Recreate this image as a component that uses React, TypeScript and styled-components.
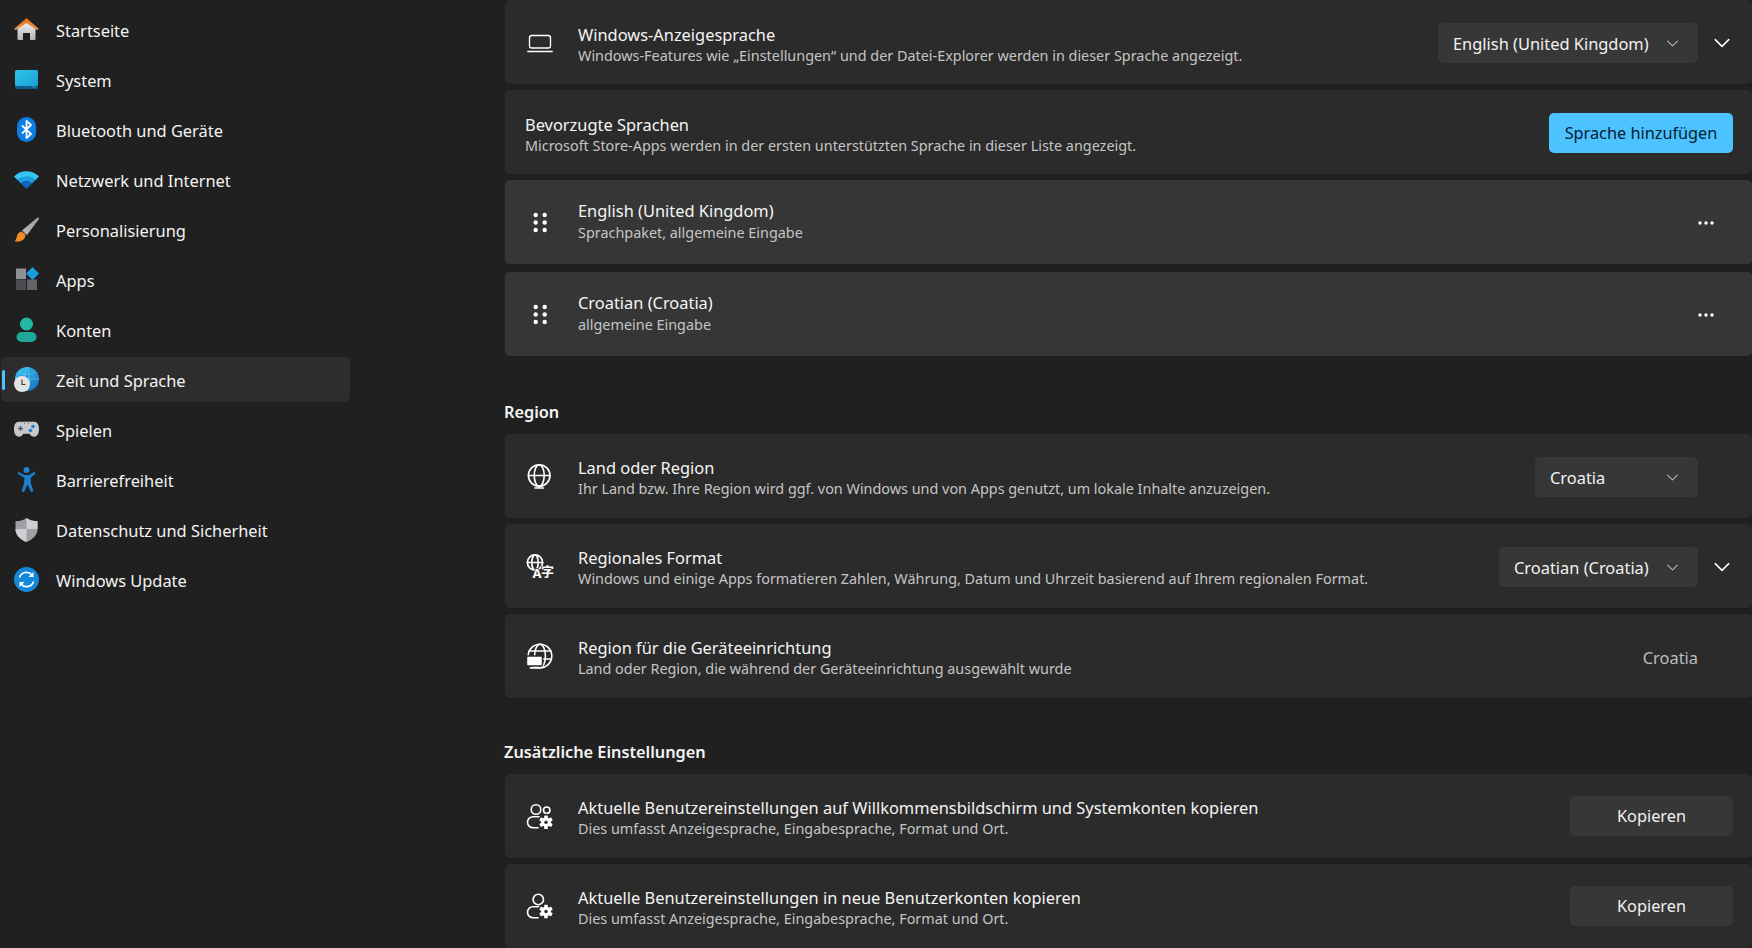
import React from "react";
import styled, { createGlobalStyle } from "styled-components";

const Global = createGlobalStyle`
  html, body { margin: 0; padding: 0; background: #202020; height: 100%; overflow: hidden; }
  * { box-sizing: border-box; }
  body { font-family: "Noto Sans", "Open Sans", sans-serif; color: #fff; }
`;

const Page = styled.div`
  display: flex;
  width: 1752px;
  height: 948px;
  overflow: hidden;
  background: #202020;
`;

const Sidebar = styled.nav`
  width: 505px;
  flex: none;
  padding: 7px 0 0 1px;
  display: flex;
  flex-direction: column;
  gap: 5px;
`;

const NavItem = styled.div<{ $active?: boolean }>`
  position: relative;
  width: 349px;
  height: 45px;
  display: flex;
  align-items: center;
  gap: 17px;
  padding-left: 13px;
  border-radius: 5px;
  background: ${(p) => (p.$active ? "#2d2d2d" : "transparent")};
  font-size: 16.4px;
  color: #f4f4f4;
`;

const NavLabel = styled.span`
  padding-top: 1px;
`;

const Accent = styled.span`
  position: absolute;
  left: 1px;
  top: 13px;
  width: 3px;
  height: 20px;
  border-radius: 2px;
  background: #4cc2ff;
`;

const NavIcon = styled.svg`
  width: 25px;
  height: 25px;
  flex: none;
`;

const Main = styled.main`
  flex: 1;
  display: flex;
  flex-direction: column;
`;

const Card = styled.section<{ $raised?: boolean; $gap?: number }>`
  height: 85px;
  flex: none;
  display: flex;
  align-items: center;
  margin-bottom: ${(p) => p.$gap ?? 5}px;
  border-radius: 5px;
  border-bottom: 1px solid #1c1c1c;
  background: ${(p) => (p.$raised ? "#363636" : "#2b2b2b")};
`;

const LeadIcon = styled.div`
  width: 73px;
  flex: none;
  display: flex;
  justify-content: center;
  padding-right: 3px;
`;

const PlainLead = styled.div`
  width: 20px;
  flex: none;
`;

const TextBlock = styled.div<{ $kind?: "top" | "raised" }>`
  flex: 1;
  min-width: 0;
  display: flex;
  flex-direction: column;
  gap: ${(p) => (p.$kind === "raised" ? 1 : 0)}px;
  padding: ${(p) => (p.$kind === "raised" ? "0 0 2px" : p.$kind === "top" ? "4px 0 0" : "2px 0 0")};
`;

const Title = styled.div`
  font-size: 16.4px;
  line-height: 22px;
  color: #f5f5f5;
`;

const Sub = styled.div`
  font-size: 14.4px;
  line-height: 19px;
  color: #c5c5c5;
`;

const Trail = styled.div<{ $pad: number; $flat?: boolean }>`
  flex: none;
  display: flex;
  align-items: center;
  margin-top: ${(p) => (p.$flat ? 0 : 2)}px;
  padding-right: ${(p) => p.$pad}px;
`;

const Select = styled.div<{ $w: number }>`
  width: ${(p) => p.$w}px;
  height: 40px;
  padding: 0 19px 0 15px;
  display: flex;
  align-items: center;
  justify-content: space-between;
  border-radius: 5px;
  background: #373737;
  font-size: 16.4px;
  color: #f2f2f2;
`;

const Expand = styled.div`
  width: 54px;
  display: flex;
  justify-content: center;
  padding-right: 6px;
`;

const Primary = styled.button`
  width: 184px;
  height: 40px;
  border: 0;
  border-radius: 5px;
  background: #4cc2ff;
  color: #04202f;
  font: inherit;
  font-size: 16.3px;
  padding: 0;
`;

const Secondary = styled.button`
  width: 163px;
  height: 40px;
  border: 0;
  border-radius: 5px;
  background: #373737;
  color: #f2f2f2;
  font: inherit;
  font-size: 16.3px;
  padding: 0;
`;

const Value = styled.div`
  font-size: 16.4px;
  color: #bdbdbd;
`;

const Heading = styled.h2<{ $top: number }>`
  margin: ${(p) => p.$top}px 0 10px -1px;
  height: 22px;
  flex: none;
  font-size: 16.3px;
  line-height: 20px;
  font-weight: 600;
  color: #f5f5f5;
`;

const Chevron = ({ size = 18, color = "#fff" }: { size?: number; color?: string }) => (
  <svg width={size} height={size} viewBox="0 0 16 16" fill="none">
    <path d="M2 5l6 6 6-6" stroke={color} strokeWidth="1.3" strokeLinecap="round" strokeLinejoin="round" />
  </svg>
);

const Small = () => <Chevron size={13} color="#b8b8b8" />;

const Dots = () => (
  <svg width="16" height="4" viewBox="0 0 16 4" fill="#fff">
    <circle cx="2" cy="2" r="1.7" />
    <circle cx="8" cy="2" r="1.7" />
    <circle cx="14" cy="2" r="1.7" />
  </svg>
);

const Glyph = ({ children }: { children: React.ReactNode }) => (
  <svg width="34" height="34" viewBox="-3 -3 34 34" fill="none" stroke="#fff" strokeWidth="1.6" strokeLinecap="round" strokeLinejoin="round">
    {children}
  </svg>
);

const Laptop = () => (
  <Glyph>
    <rect x="3.5" y="7.500" width="21" height="12.500" rx="2.200" strokeWidth="1.300" />
    <path d="M1.800 23.500h24.400" strokeWidth="1.300" />
  </Glyph>
);

const Grip = () => (
  <Glyph>
    {[7, 14.5, 22].map((y) => (
      <g key={y} fill="#fff" stroke="none">
        <circle cx="9.700" cy={y} r="2.200" />
        <circle cx="18.700" cy={y} r="2.200" />
      </g>
    ))}
  </Glyph>
);

const Globe = () => (
  <Glyph>
    <circle cx="13.200" cy="13.500" r="10.800" />
    <ellipse cx="13.200" cy="13.500" rx="5" ry="10.800" />
    <path d="M2.400 13.500h21.600M13.200 24.300v1.700M9 26h8.400" />
  </Glyph>
);

const GlobeLang = () => (
  <Glyph>
    <circle cx="9" cy="10.500" r="7.600" strokeWidth="1.700" />
    <ellipse cx="9" cy="10.500" rx="3.200" ry="7.600" strokeWidth="1.700" />
    <path d="M1.400 10.500h15.200" strokeWidth="1.700" />
    <text x="11" y="26" textAnchor="middle" fontFamily="'Noto Sans', sans-serif" fontSize="13" fontWeight="700" fill="#fff" stroke="#2b2b2b" strokeWidth="1.500" paintOrder="stroke">A</text>
    <text x="21.500" y="23.500" textAnchor="middle" fontFamily="'Noto Sans CJK SC', sans-serif" fontSize="13" fontWeight="700" fill="#fff" stroke="#2b2b2b" strokeWidth="1.500" paintOrder="stroke">字</text>
  </Glyph>
);

const GlobeDevice = () => (
  <Glyph>
    <circle cx="14" cy="14" r="11.800" />
    <ellipse cx="14" cy="14" rx="5.400" ry="11.800" />
    <path d="M3 9h22M3 17h22" />
    <rect x="0.500" y="14" width="16" height="10" rx="1.500" fill="#fff" stroke="#2b2b2b" strokeWidth="1.400" />
    <path d="M4.500 25.800h8.500" strokeWidth="1.800" />
  </Glyph>
);

const Gear = ({ x, y }: { x: number; y: number }) => (
  <g transform={`translate(${x} ${y})`} stroke="none">
    <circle r="8.400" fill="#2b2b2b" />
    <circle r="4.800" fill="#fff" />
    {[0, 60, 120].map((a) => (
      <rect key={a} x="-1.800" y="-6.800" width="3.600" height="13.600" rx=".6" fill="#fff" transform={`rotate(${a})`} />
    ))}
    <circle r="1.700" fill="#2b2b2b" />
  </g>
);

const UsersGear = () => (
  <Glyph>
    <circle cx="10" cy="7.500" r="4.800" />
    <circle cx="20.700" cy="8.200" r="3.200" />
    <path d="M15 14.800H7a5.500 5.500 0 0 0 0 11h5" />
    <Gear x={20} y={20.200} />
  </Glyph>
);

const UserGear = () => (
  <Glyph>
    <circle cx="12.300" cy="7.500" r="5.200" />
    <path d="M15 14.800H7a5.500 5.500 0 0 0 0 11h5" />
    <Gear x={20} y={19.500} />
  </Glyph>
);

const navItems: { label: string; active?: boolean; icon: React.ReactNode }[] = [
  {
    label: "Startseite",
    icon: (
      <>
        <defs>
          <linearGradient id="hb" x1="0" y1="0" x2="0" y2="1"><stop offset="0" stopColor="#f4f4f4" /><stop offset="1" stopColor="#b4b4b4" /></linearGradient>
          <linearGradient id="hr" x1="0" y1="0" x2="0" y2="1"><stop offset="0" stopColor="#d86a14" /><stop offset="1" stopColor="#f09a48" /></linearGradient>
        </defs>
        <path d="M3.500 10.500L12.500 4l9 6.500V22a1 1 0 0 1-1 1h-4.500v-7H9v7H4.500a1 1 0 0 1-1-1z" fill="url(#hb)" />
        <path d="M.5 11.500L12.500 1l12 10.500-1 1.800L12.500 6 1.500 13.300z" fill="url(#hr)" />
      </>
    ),
  },
  {
    label: "System",
    icon: (
      <>
        <defs>
          <linearGradient id="sy" x1="0" y1="0" x2="1" y2="1"><stop offset="0" stopColor="#2fc6e6" /><stop offset="1" stopColor="#1c9ed8" /></linearGradient>
        </defs>
        <rect x="1" y="3" width="23" height="16" rx="1.500" fill="url(#sy)" />
        <path d="M1 19h23v1.500a1.500 1.500 0 0 1-1.500 1.500h-20A1.500 1.500 0 0 1 1 20.500z" fill="#10598c" />
        <path d="M18.500 20h1M20.500 20h1" stroke="#9fd8ee" strokeWidth=".8" />
      </>
    ),
  },
  {
    label: "Bluetooth und Geräte",
    icon: (
      <>
        <rect x="3" y="0" width="19" height="25" rx="9.500" fill="#0a7fe8" />
        <path d="M8 8.500l9 8.500-4.500 4V4l4.500 4L8 16.500" fill="none" stroke="#fff" strokeWidth="1.800" strokeLinejoin="round" />
      </>
    ),
  },
  {
    label: "Netzwerk und Internet",
    icon: (
      <>
        <path d="M0 9.500C6.500 2.500 18.500 2.500 25 9.500l-3.800 3.800C16.500 8.500 8.500 8.500 3.800 13.300z" fill="#35c5f3" />
        <path d="M3.800 13.300C8.500 8.500 16.500 8.500 21.200 13.300l-3.400 3.400C14.500 13.500 10.500 13.500 7.200 16.700z" fill="#1c9ee6" />
        <path d="M7.200 16.700C10.500 13.500 14.500 13.500 17.800 16.700L12.500 22z" fill="#0f66bf" />
      </>
    ),
  },
  {
    label: "Personalisierung",
    icon: (
      <>
        <defs>
          <linearGradient id="br" x1="1" y1="0" x2="0" y2="1"><stop offset="0" stopColor="#9a9c9f" /><stop offset="1" stopColor="#b9bbbe" /></linearGradient>
        </defs>
        <path d="M23.500.5C24.500.3 25.200 1 25 2L13 18l-5-4.500z" fill="url(#br)" />
        <path d="M7.500 14.500c-3 .5-4 2.500-4.500 4.500C2.500 21 1.800 23.300.5 24.500c4 .5 8-.5 9.500-2.500 1.500-2 1.800-3.800 1.100-5z" fill="#f08a24" />
      </>
    ),
  },
  {
    label: "Apps",
    icon: (
      <>
        <rect x="2" y="1.500" width="10" height="10.500" fill="#8e9094" />
        <rect x="2" y="12.500" width="10" height="10.500" fill="#4b4d50" />
        <rect x="13" y="12.500" width="10" height="10.500" fill="#62646a" />
        <path d="M18.500 0L25 6.500 18.500 13 12 6.500z" fill="#1b9de2" />
      </>
    ),
  },
  {
    label: "Konten",
    icon: (
      <>
        <circle cx="12.500" cy="7" r="6.500" fill="#22b8a4" />
        <rect x="2.500" y="15" width="20" height="10" rx="5" fill="#1fa698" />
      </>
    ),
  },
  {
    label: "Zeit und Sprache",
    active: true,
    icon: (
      <>
        <defs>
          <linearGradient id="gl" x1="0" y1="0" x2="1" y2="1"><stop offset="0" stopColor="#3fc6f0" /><stop offset="1" stopColor="#0f6fc2" /></linearGradient>
        </defs>
        <circle cx="13" cy="12" r="12" fill="url(#gl)" />
        <path d="M5 5c4 3 12 3 16 0M13 0c-3 5-3 18 0 24M13 0c3 5 3 18 0 24M1 12h24" fill="none" stroke="#7fd8f5" strokeWidth=".7" opacity=".7" />
        <circle cx="8" cy="17" r="8" fill="#e2e2e2" />
        <path d="M8 12.500V17.500h3.500" fill="none" stroke="#444" strokeWidth="1.200" />
      </>
    ),
  },
  {
    label: "Spielen",
    icon: (
      <>
        <path d="M5 4.700h15c3.500 0 5 3 5 7.500 0 4.500-2 7.500-5 7.500-2 0-3-1.200-4.500-3H9.500c-1.500 1.800-2.500 3-4.500 3-3 0-5-3-5-7.500C0 7.700 1.500 4.700 5 4.700z" fill="#c6c8cc" />
        <path d="M6.500 9v5M4 11.500h5" stroke="#5a5c60" strokeWidth="1.500" />
        <circle cx="19" cy="9.500" r="1.800" fill="#1b82d8" />
        <circle cx="16.500" cy="13.500" r="1.800" fill="#1b82d8" />
        <circle cx="10.500" cy="6.300" r=".5" fill="#5a5c60" />
        <circle cx="14.500" cy="6.300" r=".5" fill="#5a5c60" />
      </>
    ),
  },
  {
    label: "Barrierefreiheit",
    icon: (
      <>
        <circle cx="12.500" cy="3" r="3" fill="#1b82d2" />
        <path d="M3.500 6.500l.9-1.800L10 8h5l5.600-3.300.9 1.800-5 4.500.6 6 2.400 7.500-2.600.5-3-7h-.8l-3 7-2.600-.5 2.400-7.500.6-6z" fill="#1b82d2" />
      </>
    ),
  },
  {
    label: "Datenschutz und Sicherheit",
    icon: (
      <>
        <path d="M12.500 1c3 2.300 7 3.200 11 3.200V12c0 6-4.500 10.200-11 13-6.500-2.800-11-7-11-13V4.200c4 0 8-.9 11-3.200z" fill="#9fa1a4" />
        <path d="M12.500 1c3 2.300 7 3.200 11 3.200V12H12.500zM12.500 12H1.500c0 6 4.500 10.200 11 13z" fill="#cfd0d2" />
      </>
    ),
  },
  {
    label: "Windows Update",
    icon: (
      <>
        <circle cx="12.500" cy="12.500" r="12.500" fill="#1487d8" />
        <path d="M5.500 10.500a7.200 7.200 0 0 1 12.500-2.500M19.500 14.500a7.200 7.200 0 0 1-12.500 2.500" fill="none" stroke="#fff" strokeWidth="1.700" />
        <path d="M19.500 5v5h-5zM5.500 20v-5h5z" fill="#fff" />
      </>
    ),
  },
];

export default function App() {
  return (
    <Page>
      <Global />
      <Sidebar>
        {navItems.map((n) => (
          <NavItem key={n.label} $active={n.active}>
            {n.active && <Accent />}
            <NavIcon viewBox="0 0 25 25">{n.icon}</NavIcon>
            <NavLabel>{n.label}</NavLabel>
          </NavItem>
        ))}
      </Sidebar>
      <Main>
        <Card>
          <LeadIcon><Laptop /></LeadIcon>
          <TextBlock $kind="top">
            <Title>Windows-Anzeigesprache</Title>
            <Sub>Windows-Features wie „Einstellungen“ und der Datei-Explorer werden in dieser Sprache angezeigt.</Sub>
          </TextBlock>
          <Trail $pad={0}>
            <Select $w={260}>English (United Kingdom)<Small /></Select>
            <Expand><Chevron /></Expand>
          </Trail>
        </Card>
        <Card>
          <PlainLead />
          <TextBlock $kind="top">
            <Title>Bevorzugte Sprachen</Title>
            <Sub>Microsoft Store-Apps werden in der ersten unterstützten Sprache in dieser Liste angezeigt.</Sub>
          </TextBlock>
          <Trail $pad={19}><Primary>Sprache hinzufügen</Primary></Trail>
        </Card>
        <Card $raised $gap={7}>
          <LeadIcon><Grip /></LeadIcon>
          <TextBlock $kind="raised">
            <Title>English (United Kingdom)</Title>
            <Sub>Sprachpaket, allgemeine Eingabe</Sub>
          </TextBlock>
          <Trail $pad={38}><Dots /></Trail>
        </Card>
        <Card $raised>
          <LeadIcon><Grip /></LeadIcon>
          <TextBlock $kind="raised">
            <Title>Croatian (Croatia)</Title>
            <Sub>allgemeine Eingabe</Sub>
          </TextBlock>
          <Trail $pad={38}><Dots /></Trail>
        </Card>

        <Heading $top={40}>Region</Heading>
        <Card>
          <LeadIcon><Globe /></LeadIcon>
          <TextBlock>
            <Title>Land oder Region</Title>
            <Sub>Ihr Land bzw. Ihre Region wird ggf. von Windows und von Apps genutzt, um lokale Inhalte anzuzeigen.</Sub>
          </TextBlock>
          <Trail $pad={54}><Select $w={163}>Croatia<Small /></Select></Trail>
        </Card>
        <Card>
          <LeadIcon><GlobeLang /></LeadIcon>
          <TextBlock>
            <Title>Regionales Format</Title>
            <Sub>Windows und einige Apps formatieren Zahlen, Währung, Datum und Uhrzeit basierend auf Ihrem regionalen Format.</Sub>
          </TextBlock>
          <Trail $pad={0}>
            <Select $w={199}>Croatian (Croatia)<Small /></Select>
            <Expand><Chevron /></Expand>
          </Trail>
        </Card>
        <Card>
          <LeadIcon><GlobeDevice /></LeadIcon>
          <TextBlock>
            <Title>Region für die Geräteeinrichtung</Title>
            <Sub>Land oder Region, die während der Geräteeinrichtung ausgewählt wurde</Sub>
          </TextBlock>
          <Trail $pad={54}><Value>Croatia</Value></Trail>
        </Card>

        <Heading $top={38}>Zusätzliche Einstellungen</Heading>
        <Card>
          <LeadIcon><UsersGear /></LeadIcon>
          <TextBlock>
            <Title>Aktuelle Benutzereinstellungen auf Willkommensbildschirm und Systemkonten kopieren</Title>
            <Sub>Dies umfasst Anzeigesprache, Eingabesprache, Format und Ort.</Sub>
          </TextBlock>
          <Trail $pad={19} $flat><Secondary>Kopieren</Secondary></Trail>
        </Card>
        <Card>
          <LeadIcon><UserGear /></LeadIcon>
          <TextBlock>
            <Title>Aktuelle Benutzereinstellungen in neue Benutzerkonten kopieren</Title>
            <Sub>Dies umfasst Anzeigesprache, Eingabesprache, Format und Ort.</Sub>
          </TextBlock>
          <Trail $pad={19} $flat><Secondary>Kopieren</Secondary></Trail>
        </Card>
      </Main>
    </Page>
  );
}
